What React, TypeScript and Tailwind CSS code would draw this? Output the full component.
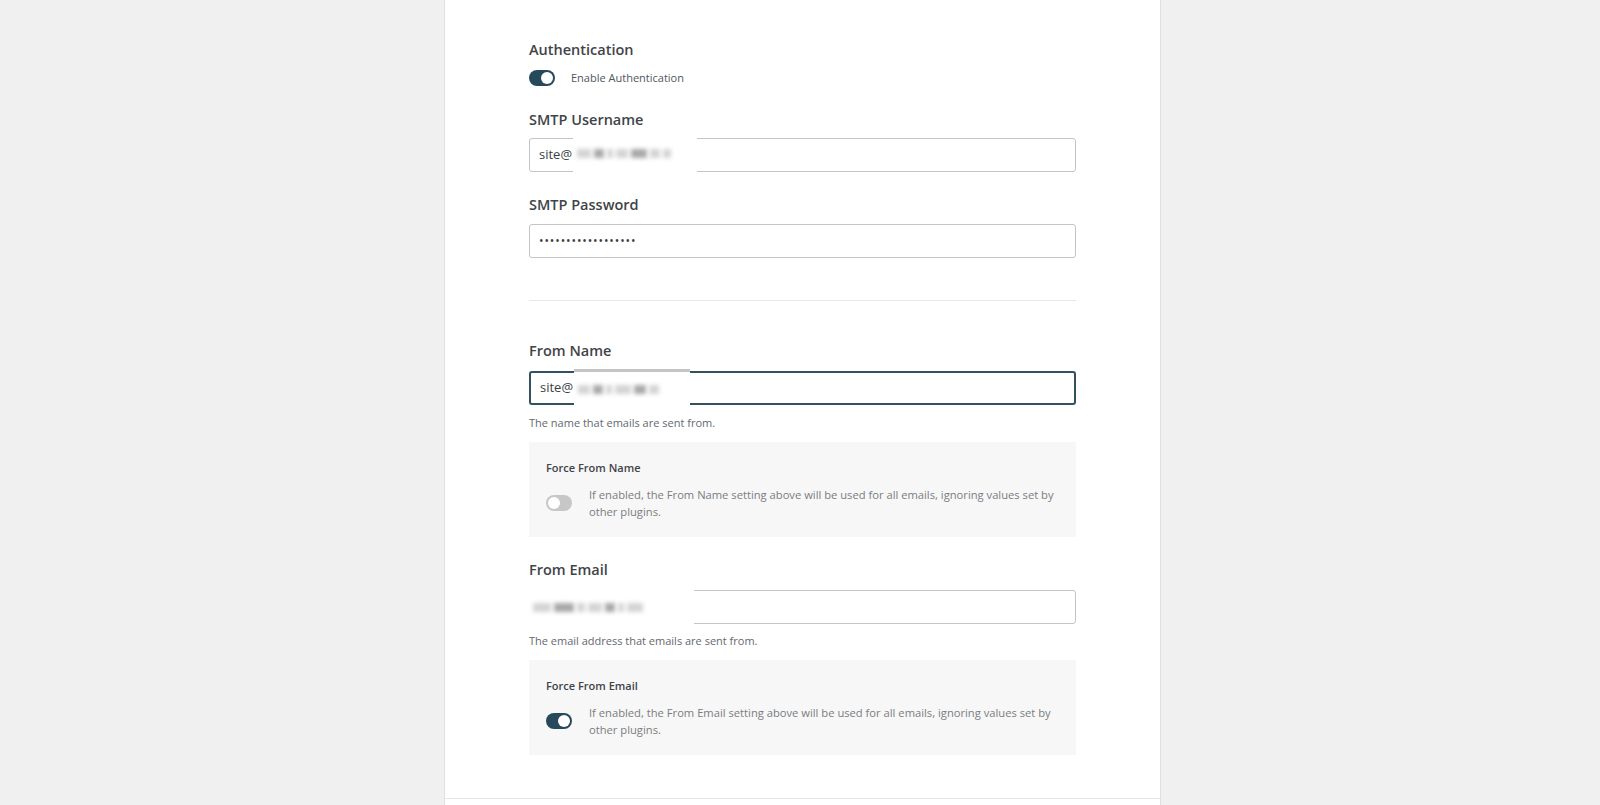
import React from "react"

const font = { fontFamily: '"Open Sans", "Noto Sans", sans-serif' }

function Toggle({ on }: { on: boolean }) {
  return (
    <span
      className={`relative inline-flex h-[16px] w-[26px] shrink-0 items-center rounded-full ${
        on ? "bg-[#26495b]" : "bg-[#c7c7c7]"
      }`}
    >
      <span
        className={`absolute top-[2px] h-[12px] w-[12px] rounded-full bg-white ${on ? "left-[12px]" : "left-[2px]"}`}
      />
    </span>
  )
}

function Blur({ className, blocks }: { className: string; blocks: number[] }) {
  return (
    <div className={`absolute flex items-center gap-[3px] bg-white pl-[4px] ${className}`}>
      {blocks.map((w, i) => (
        <span
          key={i}
          className={`h-[9px] blur-[2px] ${i % 3 === 1 ? "bg-[#a8a8a8]" : "bg-[#d4d4d4]"}`}
          style={{ width: w }}
        />
      ))}
    </div>
  )
}

function Label({ children, className = "" }: { children: React.ReactNode; className?: string }) {
  return <div className={`h-5 text-[14.5px] leading-5 font-semibold text-[#3f4449] ${className}`}>{children}</div>
}

function Input({ children, focused = false }: { children?: React.ReactNode; focused?: boolean }) {
  return (
    <div
      className={`relative flex h-[34px] items-center rounded-[3px] bg-white px-[9px] text-[13px] text-[#3a3f44] ${
        focused ? "border-2 border-[#33505f] px-[8px]" : "border border-[#c3c4c7]"
      }`}
    >
      {children}
    </div>
  )
}

function ForceBox({ title, text, on }: { title: string; text: string; on: boolean }) {
  return (
    <div className="h-[95px] bg-[#f7f7f7] px-[17px] pt-[18px]">
      <div className="h-4 text-[11px] leading-4 font-semibold text-[#3f4449]">{title}</div>
      <div className="mt-[10px] flex items-center gap-[17px]">
        <Toggle on={on} />
        <p className="text-[11.2px] leading-[17px] text-[#7a7d81]">{text}</p>
      </div>
    </div>
  )
}

export default function App() {
  return (
    <div className="min-h-screen bg-[#f0f0f1]" style={font}>
      <div className="ml-[444px] flex h-[805px] w-[717px] flex-col border-x border-[#e0e0e0] bg-white">
        <div className="px-[84px] pt-[40px]">
          <Label>Authentication</Label>
          <div className="mt-[10px] flex h-4 items-center gap-[16px]">
            <Toggle on />
            <span className="text-[11px] text-[#50575e]">Enable Authentication</span>
          </div>

          <Label className="mt-[24px]">SMTP Username</Label>
          <div className="mt-[8px]">
            <Input>
              site@
              <Blur className="top-[-5px] left-[43px] h-[38px] w-[124px]" blocks={[14, 10, 6, 12, 16, 10, 8]} />
            </Input>
          </div>

          <Label className="mt-[23px]">SMTP Password</Label>
          <div className="mt-[9px]">
            <Input>
              <span className="text-[12px] tracking-[0.9px]">••••••••••••••••••</span>
            </Input>
          </div>

          <div className="mt-[42px] border-t border-[#e8e8e8]" />

          <Label className="mt-[40px]">From Name</Label>
          <div className="mt-[10px]">
            <Input focused>
              site@
              <div className="absolute top-[-4px] left-[43px] h-[38px] w-[116px]">
                <div className="h-[3px] bg-[#c4c4c4]" />
                <Blur className="top-[3px] left-0 h-[35px] w-[116px]" blocks={[12, 10, 6, 16, 12, 10]} />
              </div>
            </Input>
          </div>
          <p className="mt-[10px] h-4 text-[11px] leading-4 text-[#646970]">The name that emails are sent from.</p>

          <div className="mt-[11px]">
            <ForceBox
              title="Force From Name"
              on={false}
              text="If enabled, the From Name setting above will be used for all emails, ignoring values set by other plugins."
            />
          </div>

          <Label className="mt-[23px]">From Email</Label>
          <div className="mt-[10px]">
            <Input>
              <Blur className="top-[-2px] left-[-1px] h-[36px] w-[165px]" blocks={[18, 20, 8, 14, 10, 6, 16]} />
            </Input>
          </div>
          <p className="mt-[9px] h-4 text-[11px] leading-4 text-[#646970]">The email address that emails are sent from.</p>

          <div className="mt-[11px]">
            <ForceBox
              title="Force From Email"
              on
              text="If enabled, the From Email setting above will be used for all emails, ignoring values set by other plugins."
            />
          </div>
        </div>
        <div className="mt-[43px] border-t border-[#e6e6e6]" />
      </div>
    </div>
  )
}
